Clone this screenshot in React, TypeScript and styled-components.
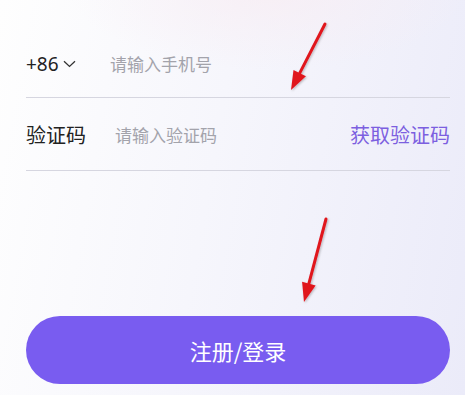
import styled, { createGlobalStyle } from 'styled-components'

// 全局樣式
const GlobalStyle = createGlobalStyle`
  html, body {
    margin: 0;
    padding: 0;
  }
  body {
    font-family: "Noto Sans CJK SC", "Noto Sans", sans-serif;
  }
`

const arrows = [
  { x1: 325, y1: 24, x2: 291, y2: 90 },
  { x1: 326, y1: 219, x2: 304, y2: 302 },
]

const Arrow = ({ x1, y1, x2, y2 }: { x1: number; y1: number; x2: number; y2: number }) => {
  const angle = Math.atan2(y2 - y1, x2 - x1)
  const len = 19
  const half = 7
  const bx = x2 - Math.cos(angle) * len
  const by = y2 - Math.sin(angle) * len
  const px = -Math.sin(angle) * half
  const py = Math.cos(angle) * half
  return (
    <g>
      <line x1={x1} y1={y1} x2={bx} y2={by} stroke="#e0141e" strokeWidth={3} strokeLinecap="round" />
      <polygon
        points={`${x2},${y2} ${bx + px},${by + py} ${bx - px},${by - py}`}
        fill="#e0141e"
      />
    </g>
  )
}

// UI元件
const App = () => {
  return (
    <>
      <GlobalStyle />
      <Page>
        <Form>
          <Row>
            <Prefix>
              +86
              <svg width="13" height="8" viewBox="0 0 13 8">
                <path d="M1 1.2 L6.5 6.4 L12 1.2" fill="none" stroke="#333" strokeWidth="1.3" />
              </svg>
            </Prefix>
            <Input placeholder="请输入手机号" $indent={8} />
          </Row>
          <Row>
            <Label>验证码</Label>
            <Input placeholder="请输入验证码" $indent={28} />
            <CodeLink>获取验证码</CodeLink>
          </Row>
        </Form>
        <SubmitButton>注册/登录</SubmitButton>
        <Overlay width="465" height="395" viewBox="0 0 465 395">
          <defs>
            <filter id="shadow" x="-50%" y="-50%" width="200%" height="200%">
              <feDropShadow dx="1" dy="1" stdDeviation="1" floodColor="#000" floodOpacity="0.25" />
            </filter>
          </defs>
          <g filter="url(#shadow)">
            {arrows.map((a, i) => (
              <Arrow key={i} {...a} />
            ))}
          </g>
        </Overlay>
      </Page>
    </>
  )
}

// UI元件樣式
const Page = styled.div`
  position: relative;
  width: 465px;
  height: 395px;
  overflow: hidden;
  box-sizing: border-box;
  padding: 30px 15px 0 26px;
  background:
    radial-gradient(ellipse 200px 80px at 270px -10px, rgba(248, 236, 242, 0.7), rgba(248, 236, 242, 0)),
    linear-gradient(100deg, #fefefe 0%, #f6f6fc 45%, #ebebf9 100%);
`

const Form = styled.div`
  display: flex;
  flex-direction: column;
`

const Row = styled.div`
  display: flex;
  align-items: center;
  height: 72px;
  border-bottom: 1px solid #d6d6e0;
  &:first-child {
    height: 67px;
  }
`

const Prefix = styled.span`
  display: flex;
  align-items: center;
  gap: 4px;
  font-family: "Noto Sans", "Noto Sans CJK SC", sans-serif;
  font-size: 19px;
  color: #222;
  width: 76px;
  svg {
    margin-top: 1px;
  }
`

const Label = styled.span`
  font-size: 20px;
  color: #222;
  width: 61px;
`

const Input = styled.input<{ $indent: number }>`
  flex: 1;
  min-width: 0;
  border: none;
  outline: none;
  background: transparent;
  padding: 0 0 0 ${(p) => p.$indent}px;
  font-family: "Noto Sans CJK SC", sans-serif;
  font-size: 17px;
  color: #333;
  &::placeholder {
    color: #a3a3ab;
  }
`

const CodeLink = styled.span`
  font-size: 20px;
  color: #7c5fe0;
  white-space: nowrap;
`

const SubmitButton = styled.button`
  display: block;
  width: 424px;
  height: 68px;
  margin-top: 145px;
  border: none;
  border-radius: 34px;
  background: #795cf0;
  color: #fff;
  font-family: "Noto Sans CJK SC", sans-serif;
  font-size: 22px;
  cursor: pointer;
`

const Overlay = styled.svg`
  position: absolute;
  left: 0;
  top: 0;
  pointer-events: none;
`

export default App
